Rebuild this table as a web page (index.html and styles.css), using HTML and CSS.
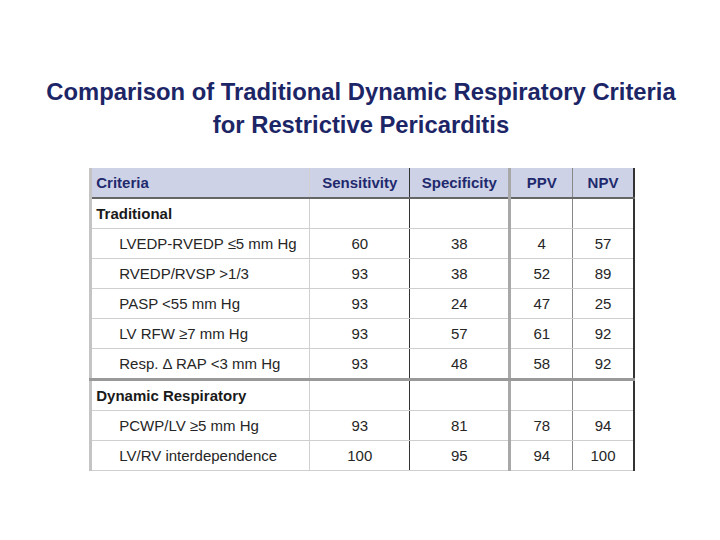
FILE: index.html
```html
<!DOCTYPE html>
<html>
<head>
<meta charset="utf-8">
<link rel="stylesheet" href="styles.css">
</head>
<body>
<div class="slide">
  <h1 class="title">Comparison of Traditional Dynamic Respiratory Criteria<br>for Restrictive Pericarditis</h1>
  <table class="grid">
    <colgroup>
      <col class="c1"><col class="c2"><col class="c3"><col class="c4"><col class="c5">
    </colgroup>
    <thead>
      <tr class="head">
        <th class="name">Criteria</th><th class="sens">Sensitivity</th><th class="spec">Specificity</th><th class="ppv">PPV</th><th class="npv">NPV</th>
      </tr>
    </thead>
    <tbody>
      <tr class="group"><td class="name">Traditional</td><td class="sens"></td><td class="spec"></td><td class="ppv"></td><td class="npv"></td></tr>
      <tr><td class="name item">LVEDP-RVEDP ≤5 mm Hg</td><td class="sens">60</td><td class="spec">38</td><td class="ppv">4</td><td class="npv">57</td></tr>
      <tr><td class="name item">RVEDP/RVSP &gt;1/3</td><td class="sens">93</td><td class="spec">38</td><td class="ppv">52</td><td class="npv">89</td></tr>
      <tr><td class="name item">PASP &lt;55 mm Hg</td><td class="sens">93</td><td class="spec">24</td><td class="ppv">47</td><td class="npv">25</td></tr>
      <tr><td class="name item">LV RFW ≥7 mm Hg</td><td class="sens">93</td><td class="spec">57</td><td class="ppv">61</td><td class="npv">92</td></tr>
      <tr class="last"><td class="name item">Resp. Δ RAP &lt;3 mm Hg</td><td class="sens">93</td><td class="spec">48</td><td class="ppv">58</td><td class="npv">92</td></tr>
      <tr class="group"><td class="name">Dynamic Respiratory</td><td class="sens"></td><td class="spec"></td><td class="ppv"></td><td class="npv"></td></tr>
      <tr><td class="name item">PCWP/LV ≥5 mm Hg</td><td class="sens">93</td><td class="spec">81</td><td class="ppv">78</td><td class="npv">94</td></tr>
      <tr><td class="name item">LV/RV interdependence</td><td class="sens">100</td><td class="spec">95</td><td class="ppv">94</td><td class="npv">100</td></tr>
    </tbody>
  </table>
</div>
</body>
</html>
```
FILE: styles.css
```css
html, body {
  margin: 0;
  padding: 0;
  background: #ffffff;
}
.slide {
  width: 720px;
  height: 540px;
  display: flex;
  flex-direction: column;
  align-items: center;
  font-family: "Liberation Sans", Arial, sans-serif;
}
.title {
  margin: 75px 0 0 2px;
  font-size: 23.8px;
  line-height: 33px;
  font-weight: bold;
  color: #1c2566;
  text-align: center;
}
.grid {
  margin: 27px 0 0 4px;
  border-collapse: collapse;
  table-layout: fixed;
  width: 545px;
  font-size: 15px;
  color: #262626;
  border-left: 3px solid #c4c4c4;
  border-right: 2px solid #333333;
  border-bottom: 1px solid #dddddd;
}
.c1 { width: 219px; }
.c2 { width: 100px; }
.c3 { width: 100px; }
.c4 { width: 63px; }
.c5 { width: 61px; }
.grid th, .grid td {
  height: 29px;
  padding: 0;
  text-align: center;
  border-bottom: 1px solid #cfcfcf;
  white-space: nowrap;
}
.head th {
  background: #ced2e6;
  color: #1f2a6e;
  font-weight: bold;
  border-bottom: 2px solid #666666;
}
.grid .name { text-align: left; padding-left: 4px; }
.grid .item { padding-left: 27px; }
.group .name { font-weight: bold; color: #1a1a1a; }
.grid .sens { border-left: 1px solid #d0d0d0; }
.grid .spec { border-left: 1px solid #333333; }
.grid .ppv { border-left: 3px solid #a8a8a8; }
.grid .npv { border-left: 1px solid #888888; }
.last td { border-bottom: 3px solid #999999; }
```
